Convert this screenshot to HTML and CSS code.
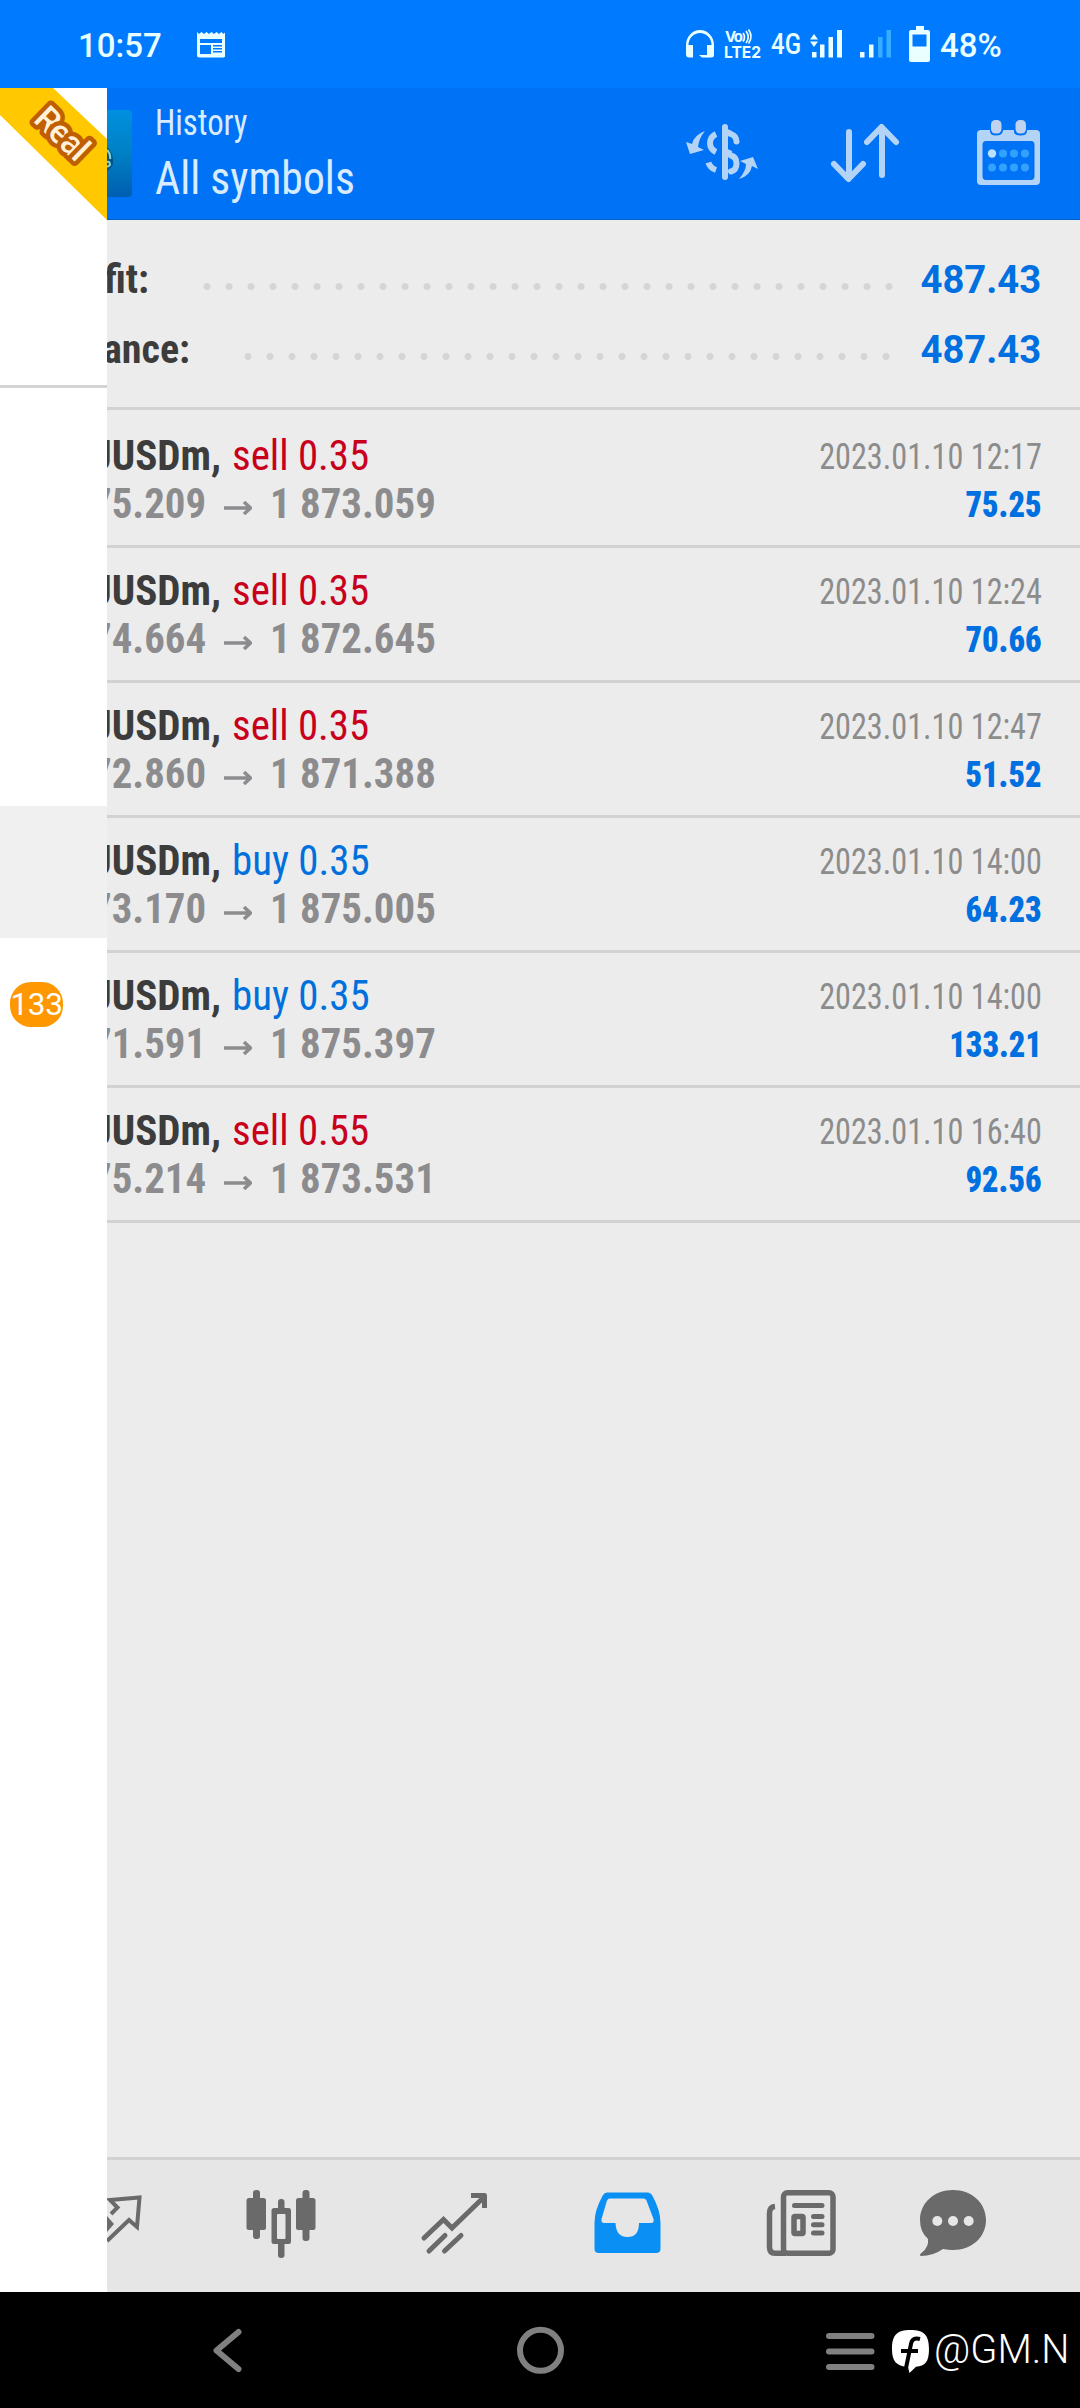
FILE: index.html
```html
<!DOCTYPE html>
<html lang="en">
<head>
<meta charset="utf-8">
<title>History</title>
<link rel="stylesheet" href="styles.css">
</head>
<body>
<div class="screen">
  <header class="status">
    <span class="clock">10:57</span>
    <svg class="note" width="28" height="26" viewBox="197 32 28 26"><path d="M197 32l2 2 2.500-2 2.500 2 2.500-2 2.500 2 2.500-2 2.500 2 2.500-2 2.500 2 2.500-2 2 2 2-2V55q0 2.500-2.500 2.500H199.500Q197 57.500 197 55Z" fill="#eaffff"/><path d="M200 39h22v4h-22zM200 45h11v9h-11zM213 45h9v1.500h-9zM213 48h9v1.500h-9zM213 51h9v1.500h-9z" fill="#007bff"/></svg>
    <svg class="signals" width="254" height="44" viewBox="684 22 254 44">
      <g fill="#eaffff">
        <path d="M686 45A14 15 0 0 1 714 45V55Q714 57.500 711 57.500H707V45H711.500A11.500 12 0 0 0 688.500 45H693V57.500H689Q686 57.500 686 54Z"/>
        <path d="M699 55h9v2.500h-6z"/>
        <path d="M814 34l4 5.500h-8zM814 47l4-5.500h-8zM812 52h4.500v5.500h-4.500zM820 44.500h4.500v13h-4.500zM828.500 37h4.500v20.500h-4.500zM837 30h5v27.500h-5zM860 52h4.500v5.500h-4.500zM869 44.500h4.500v13h-4.500z"/>
        <path fill-rule="evenodd" d="M916 26h8v4h4q2 0 2 2v28q0 2-2 2h-17q-2 0-2-2V32q0-2 2-2h5zM912.500 34.500v12h14v-12z"/>
      </g>
      <path d="M878 37h4.500v20.500h-4.500zM886.500 30h4.500v27.500h-4.500z" fill="#36adff"/>
      <g class="lte" fill="#eaffff">
        <text x="725" y="42" font-size="15" textLength="18">Vo</text>
        <text x="724" y="57.500" font-size="16.500" textLength="37" lengthAdjust="spacingAndGlyphs">LTE2</text>
      </g>
      <path d="M743 33q3 4 0 8.500M746 31q4.500 6 0 12M748.500 29.500q5 7 0 14" fill="none" stroke="#eaffff" stroke-width="1.700"/>
      <text class="net" x="771" y="54" font-size="30" textLength="30" lengthAdjust="spacingAndGlyphs" fill="#eaffff">4G</text>
    </svg>
    <span class="battery">48%</span>
  </header>

  <div class="app">
    <aside class="drawer">
      <div class="account">
        <svg width="107" height="132" viewBox="0 88 107 132"><path d="M0 88H53L107 139V220L0 115Z" fill="#ffc800"/><text class="ribbon" transform="translate(57 139) rotate(44)" text-anchor="middle" x="0" y="4" textLength="61">Real</text></svg>
      </div>
      <div class="menu-space"></div>
      <div class="menu-active"></div>
      <div class="menu-item"><span class="badge">133</span></div>
    </aside>

    <main class="main">
      <div class="toolbar">
        <svg class="avatar" width="25" height="87" viewBox="107 111 25 87"><defs><linearGradient id="tile" x1="0" y1="0" x2="0" y2="1"><stop offset="0" stop-color="#0090e0"/><stop offset=".5" stop-color="#0080c4"/><stop offset="1" stop-color="#005eb0"/></linearGradient></defs><path d="M107 111H128q4 0 4 4V194q0 4-4 4H107Z" fill="url(#tile)"/><path d="M107 148q7 6 6 17-2 5-6 7z" fill="#00548c"/><path d="M107 151q4 4 3 9M107 163q3-1 3 3l-3 2" fill="none" stroke="#8ed8c8" stroke-width="2"/></svg>
        <div class="heading"><div class="sub">History</div><div class="title">All symbols</div></div>
        <svg width="394" height="132" viewBox="686 88 394 132">
          <g fill="none" stroke="#b3d4f7" stroke-width="6" stroke-linecap="round" stroke-linejoin="round">
            <path d="M725 127V177M731 134q5 1.500 5.500 7.500M731 155.500q5.500 1.500 5.500 8t-5.500 8" />
            <path d="M716 134q-6 3-6 9t6 9M716 170q-6-2-7.500-7.500M731 134l-4-2M731 154l-4-2" stroke-linecap="butt"/>
            <path d="M849 132V178M834 164l14.500 15L863 164M882 175V128M867 142l14.500-15L896 142"/>
          </g>
          <path d="M705 131Q694 135 692 144L686 142 690 154 704 150 698 147Q699 138 705 131Z" fill="#b3d4f7"/>
          <path d="M739 179Q750 176 752 166L758 169 753 157 740 161 746 164Q746 171 739 179Z" fill="#b3d4f7"/>
          <path fill-rule="evenodd" d="M981 130H990V131Q990 135.500 996 135.500T1003 131V130H1014V131.500Q1014 135.500 1020.500 135.500T1027 131V130H1036Q1040 130 1040 134V181Q1040 185 1036 185H981Q977 185 977 181V134Q977 130 981 130ZM986 141Q982.500 141 982.500 145V176Q982.500 180 986 180H1031Q1034.500 180 1034.500 176V145Q1034.500 141 1031 141Z" fill="#b3d4f7"/>
          <rect x="991" y="120" width="10.500" height="13.500" rx="4.500" fill="#bfd3f0"/><rect x="1015.500" y="120" width="10.500" height="13.500" rx="4.500" fill="#bfd3f0"/>
          <circle cx="992" cy="153.500" r="4.200" fill="#b8e0ff"/>
          <g fill="#33a2ff"><circle cx="1003" cy="153.500" r="4"/><circle cx="1014" cy="153.500" r="4"/><circle cx="1025" cy="153.500" r="4"/><circle cx="992" cy="167.500" r="4"/><circle cx="1003" cy="167.500" r="4"/><circle cx="1014" cy="167.500" r="4"/><circle cx="1025" cy="167.500" r="4"/></g>
        </svg>
      </div>

      <section class="summary">
        <div class="sum-row"><span class="sum-label profit">Profit:</span><span class="dots d32"></span><span class="sum-value">487.43</span></div>
        <div class="sum-row"><span class="sum-label balance">Balance:</span><span class="dots d30"></span><span class="sum-value">487.43</span></div>
      </section>

      <section class="deals">
        <article class="deal"><div class="line"><b class="symbol"><span>UUSDm,</span></b><span class="sell">sell 0.35</span><time>2023.01.10 12:17</time></div><div class="line prices"><span class="open"><span>75.209</span></span><svg class="arrow" width="28" height="14" viewBox="0 0 28 14"><path d="M0 7H26M20 1L26.500 7L20 13"/></svg><span class="close">1 873.059</span><b class="gain">75.25</b></div></article>
        <article class="deal"><div class="line"><b class="symbol"><span>UUSDm,</span></b><span class="sell">sell 0.35</span><time>2023.01.10 12:24</time></div><div class="line prices"><span class="open"><span>74.664</span></span><svg class="arrow" width="28" height="14" viewBox="0 0 28 14"><path d="M0 7H26M20 1L26.500 7L20 13"/></svg><span class="close">1 872.645</span><b class="gain">70.66</b></div></article>
        <article class="deal"><div class="line"><b class="symbol"><span>UUSDm,</span></b><span class="sell">sell 0.35</span><time>2023.01.10 12:47</time></div><div class="line prices"><span class="open"><span>72.860</span></span><svg class="arrow" width="28" height="14" viewBox="0 0 28 14"><path d="M0 7H26M20 1L26.500 7L20 13"/></svg><span class="close">1 871.388</span><b class="gain">51.52</b></div></article>
        <article class="deal"><div class="line"><b class="symbol"><span>UUSDm,</span></b><span class="buy">buy 0.35</span><time>2023.01.10 14:00</time></div><div class="line prices"><span class="open"><span>73.170</span></span><svg class="arrow" width="28" height="14" viewBox="0 0 28 14"><path d="M0 7H26M20 1L26.500 7L20 13"/></svg><span class="close">1 875.005</span><b class="gain">64.23</b></div></article>
        <article class="deal"><div class="line"><b class="symbol"><span>UUSDm,</span></b><span class="buy">buy 0.35</span><time>2023.01.10 14:00</time></div><div class="line prices"><span class="open"><span>71.591</span></span><svg class="arrow" width="28" height="14" viewBox="0 0 28 14"><path d="M0 7H26M20 1L26.500 7L20 13"/></svg><span class="close">1 875.397</span><b class="gain">133.21</b></div></article>
        <article class="deal"><div class="line"><b class="symbol"><span>UUSDm,</span></b><span class="sell">sell 0.55</span><time>2023.01.10 16:40</time></div><div class="line prices"><span class="open"><span>75.214</span></span><svg class="arrow" width="28" height="14" viewBox="0 0 28 14"><path d="M0 7H26M20 1L26.500 7L20 13"/></svg><span class="close">1 873.531</span><b class="gain">92.56</b></div></article>
      </section>

      <nav class="tabs">
        <svg width="87" height="132" viewBox="107 2160 87 132"><path d="M107 2241L129 2220L137 2227L139.500 2197.500L110 2200L117.500 2207.500L111 2214" fill="none" stroke="#6a6a6a" stroke-width="4"/><path d="M107 2216L114 2224L107 2232Z" fill="#6a6a6a"/></svg>
        <svg width="173" height="132" viewBox="194 2160 173 132"><g fill="#6a6a6a"><rect x="253" y="2190" width="7" height="49" rx="3"/><rect x="246.500" y="2198" width="19.500" height="32" rx="2.500"/><rect x="302.500" y="2190" width="7" height="51" rx="3"/><rect x="296" y="2198" width="19.500" height="32" rx="2.500"/><rect x="278" y="2199" width="6.500" height="59" rx="3"/><rect x="271.500" y="2208" width="19.500" height="36" rx="2.500"/></g><rect x="277" y="2214" width="8.500" height="25" rx="1" fill="#e6e6e6"/></svg>
        <svg width="173" height="132" viewBox="367 2160 173 132"><path d="M424 2238L443.500 2219.500L452 2228L483 2198M429 2251L445 2235.500M444.500 2251L461 2235.500" fill="none" stroke="#6a6a6a" stroke-width="5" stroke-linecap="round"/><path d="M471 2195.500H484.500V2208" fill="none" stroke="#6a6a6a" stroke-width="5" stroke-linejoin="round"/></svg>
        <svg width="174" height="132" viewBox="540 2160 174 132"><path fill-rule="evenodd" d="M607 2192.500H648Q650.500 2192.500 652 2195Q660.500 2210 660.500 2223V2249Q660.500 2253 656 2253H599Q594.500 2253 594.500 2249V2223Q594.500 2210 603 2195Q604.500 2192.500 607 2192.500ZM610 2198.500Q608 2198.500 607 2200.500L601.500 2219Q601 2223 604 2223H615.500Q616 2237 627.500 2237T639 2223H651Q654.500 2223 653.500 2219L646.500 2200.500Q645.500 2198.500 643.500 2198.500Z" fill="#0a8ff5"/></svg>
        <svg width="174" height="132" viewBox="714 2160 174 132"><g fill="none" stroke="#6a6a6a" stroke-width="5.500"><rect x="783.500" y="2192.700" width="49.500" height="60.500" rx="4"/><path d="M775 2206.500Q769.500 2207 769.500 2213V2247Q769.500 2253.200 775 2253.200H786"/><path d="M794.500 2205.500H822M813.500 2216.500H822M813.500 2224.800H822M813.500 2233H822" stroke-width="5" stroke-linecap="round"/><rect x="794" y="2216.500" width="9" height="17" rx="1"/></g></svg>
        <svg width="192" height="132" viewBox="888 2160 192 132"><path d="M953 2190C972 2190 986 2203 986 2220S972 2250 953 2250Q948 2250 943 2249Q933 2256 921 2256Q918.500 2255 922 2252.500Q929 2247 928 2239Q920 2232 920 2220C920 2203 934 2190 953 2190Z" fill="#6a6a6a"/><g fill="#e6e6e6"><circle cx="937.300" cy="2221" r="5"/><circle cx="953" cy="2221" r="5"/><circle cx="968.700" cy="2221" r="5"/></g></svg>
      </nav>
    </main>
  </div>

  <footer class="navbar">
    <svg width="934" height="116" viewBox="0 2292 934 116"><g fill="none" stroke="#808080" stroke-width="6" stroke-linecap="round" stroke-linejoin="round"><path d="M238.500 2332L216.500 2350.500L238.500 2369"/><circle cx="540.500" cy="2350.300" r="20.500"/><path d="M829 2336H871.500M829 2351.500H871.500M829 2367H871.500"/></g><path d="M910.500 2330C924 2330 929 2335 929 2349C929 2362 925 2366 916 2366.800L909.500 2373L908 2367C896 2366 892 2361 892 2349C892 2335 897 2330 910.500 2330Z" fill="#fff"/><path d="M920 2339Q912 2337 911 2344L906 2368M901 2351H918" fill="none" stroke="#000" stroke-width="4"/></svg>
    <span class="handle">@GM.N</span>
  </footer>
</div>
</body>
</html>
```
FILE: styles.css
```css
* { box-sizing: border-box; }
body { margin: 0; background: #000; }
svg { display: block; flex: none; }
.screen {
  width: 1080px; height: 2408px; overflow: hidden;
  display: flex; flex-direction: column;
  font-family: "Roboto Condensed", Roboto, sans-serif; font-stretch: 75%;
  white-space: nowrap;
}

/* Status bar */
.status {
  flex: none; height: 88px; display: flex; align-items: center;
  background: #007bff; color: #eaffff;
  font-family: Roboto, sans-serif; font-stretch: 100%; font-weight: 500;
}
.clock { width: 119px; margin-left: 78px; font-size: 33px; line-height: 88px; padding-top: 3px; }
.note { margin-top: 2px; margin-right: 459px; }
.battery { margin-left: 2px; padding-top: 3px; font-size: 33px; }
.lte { font-family: Inter, sans-serif; font-weight: 700; }
.net { font-weight: 500; }

.app { flex: none; height: 2204px; display: flex; }

/* Side drawer */
.drawer { flex: none; width: 107px; background: #fff; }
.account { height: 300px; border-bottom: 3px solid #d4d4d4; }
.ribbon {
  font: 500 34px Roboto, sans-serif; fill: #fff2d8;
  stroke: #bf5f00; stroke-width: 9px; stroke-linejoin: round; paint-order: stroke;
}
.menu-space { height: 418px; }
.menu-active { height: 132px; background: #f0f0f0; }
.menu-item { height: 132px; padding: 44px 0 0 10px; }
.badge {
  display: flex; justify-content: center; width: 53px; height: 45px;
  border-radius: 21px; background: #ff9800; color: #fff;
  font: 400 31.500px/45px Roboto, sans-serif; letter-spacing: -.4px;
}

/* History screen */
.main { flex: none; width: 973px; display: flex; flex-direction: column; overflow: hidden; background: #ececec; }
.toolbar { flex: none; height: 132px; display: flex; align-items: center; background: #0072f5; color: #d9ecff; border-bottom: 1px solid #0062c8; }
.avatar { margin-right: 23px; }
.heading { width: 531px; padding-top: 5px; }
.sub { font-size: 36px; line-height: 44px; transform: scaleX(.91); transform-origin: left; }
.title { font-size: 47px; line-height: 66px; transform: scaleX(.93); transform-origin: left; }

.summary { flex: none; height: 190px; padding: 25px 39px 0 0; border-bottom: 3px solid #d2d2d2; }
.sum-row { display: flex; justify-content: flex-end; height: 70px; line-height: 70px; }
.sum-label { margin-right: auto; font-weight: 700; font-size: 40px; color: #3c3c3c; display: flex; justify-content: flex-end; }
.profit { width: 42px; }
.balance { width: 83px; }
.dots {
  height: 7px; margin: 38px 18px 0 0;
  background: radial-gradient(circle at 11px 3.500px, #d5d5d5 3.100px, transparent 3.900px) 0 0 / 22px 7px repeat-x;
}
.d32 { width: 704px; }
.d30 { width: 660px; margin-right: 21px; }
.sum-value { font: 700 39px/70px Roboto, sans-serif; font-stretch: 100%; color: #0070e0; transform: scaleX(.98); transform-origin: right; }

.deals { flex: 1; }
.deal { height: 135px; padding: 18px 38px 0 0; border-bottom: 3px solid #d2d2d2; }
.deal:first-child { height: 138px; padding-top: 21px; }
.line { display: flex; height: 48px; line-height: 48px; font-size: 43px; }
.symbol { width: 114px; margin-right: 11px; color: #3c3c3c; display: flex; justify-content: flex-end; }
.symbol span { transform: scaleX(.955); transform-origin: right; }
.sell, .buy { transform: scaleX(.95); transform-origin: left; }
.sell { color: #c8001c; }
.buy { color: #0070dc; }
time { margin-left: auto; font-size: 36px; line-height: 52px; color: #8c8c8c; transform: scaleX(.895); transform-origin: right; }
.prices { font-weight: 700; font-size: 43px; color: #8c8c8e; }
.open { width: 99px; display: flex; justify-content: flex-end; }
.open span { transform: scaleX(.95); transform-origin: right; }
.close { transform: scaleX(.95); transform-origin: left; }
.arrow { margin: 22px 18px 0 18px; fill: none; stroke: #8c8c8e; stroke-width: 3.500px; }
.gain { margin-left: auto; font-size: 36px; line-height: 53px; color: #0070e0; transform: scaleX(.9); transform-origin: right; }

.tabs { flex: none; height: 135px; display: flex; border-top: 3px solid #d2d2d2; background: #e6e6e6; }

/* System navigation */
.navbar { flex: none; height: 116px; display: flex; background: #000; color: #fff; }
.handle { font: 300 40.500px/114px Roboto, sans-serif; font-stretch: 100%; transform: scaleX(.98); transform-origin: left; }
```
